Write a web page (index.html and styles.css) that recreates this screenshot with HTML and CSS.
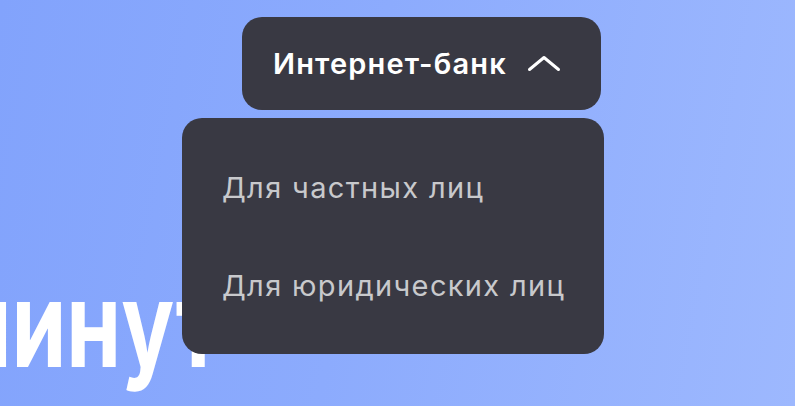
FILE: index.html
```html
<!DOCTYPE html>
<html lang="ru">
<head>
<meta charset="utf-8">
<title>Интернет-банк</title>
<link rel="stylesheet" href="styles.css">
</head>
<body>
<div class="page">
  <nav class="nav">
    <button class="nav-button" type="button">
      <span class="nav-label">Интернет-банк</span>
      <svg class="chevron" width="34" height="18" viewBox="0 0 34 18" aria-hidden="true">
        <path d="M2.5 14.5 L17 2.5 L31.5 14.5" fill="none" stroke="#ffffff" stroke-width="3" stroke-linecap="round" stroke-linejoin="round"/>
      </svg>
    </button>
    <ul class="dropdown">
      <li class="dropdown-item">Для частных лиц</li>
      <li class="dropdown-item">Для юридических лиц</li>
    </ul>
  </nav>
  <h1 class="hero-title"><span class="hero-word">минут</span></h1>
</div>
</body>
</html>
```

FILE: styles.css
```css
html, body {
  margin: 0;
  padding: 0;
}

body {
  width: 795px;
  height: 406px;
  overflow: hidden;
  background: linear-gradient(100deg, #82a3fc 0%, #8cabfd 45%, #9db8fe 100%);
  font-family: Inter, "Noto Sans", sans-serif;
}

.page {
  display: flex;
  flex-direction: column;
}

.nav {
  position: relative;
  margin: 17px 0 0 242px;
  width: 359px;
}

.nav-button {
  box-sizing: border-box;
  width: 359px;
  height: 93px;
  display: flex;
  align-items: center;
  gap: 20px;
  padding: 0 0 0 31px;
  border: 0;
  border-radius: 20px;
  background: #393943;
  color: #ffffff;
  font-family: Inter, "Noto Sans", sans-serif;
  font-size: 29px;
  font-weight: 600;
  line-height: 36px;
  letter-spacing: 1.15px;
  cursor: pointer;
}

.chevron {
  display: block;
  flex: none;
}

.dropdown {
  position: absolute;
  top: 101px;
  left: -60px;
  box-sizing: border-box;
  width: 422px;
  margin: 0;
  padding: 21px 0 19px;
  list-style: none;
  background: #393943;
  border-radius: 20px;
  z-index: 2;
}

.dropdown-item {
  padding: 31px 40px;
  color: #c8c9cc;
  font-size: 29px;
  font-weight: 400;
  line-height: 36px;
  letter-spacing: 1.35px;
  white-space: nowrap;
}

.hero-title {
  margin: 155px 0 0 0;
  font-family: Inter, "Noto Sans", sans-serif;
  font-size: 119px;
  font-weight: 700;
  line-height: 119px;
  color: #ffffff;
  white-space: nowrap;
}

.hero-word {
  display: inline-block;
  margin-left: -60px;
  transform: scaleX(0.74);
  transform-origin: left center;
}
```
